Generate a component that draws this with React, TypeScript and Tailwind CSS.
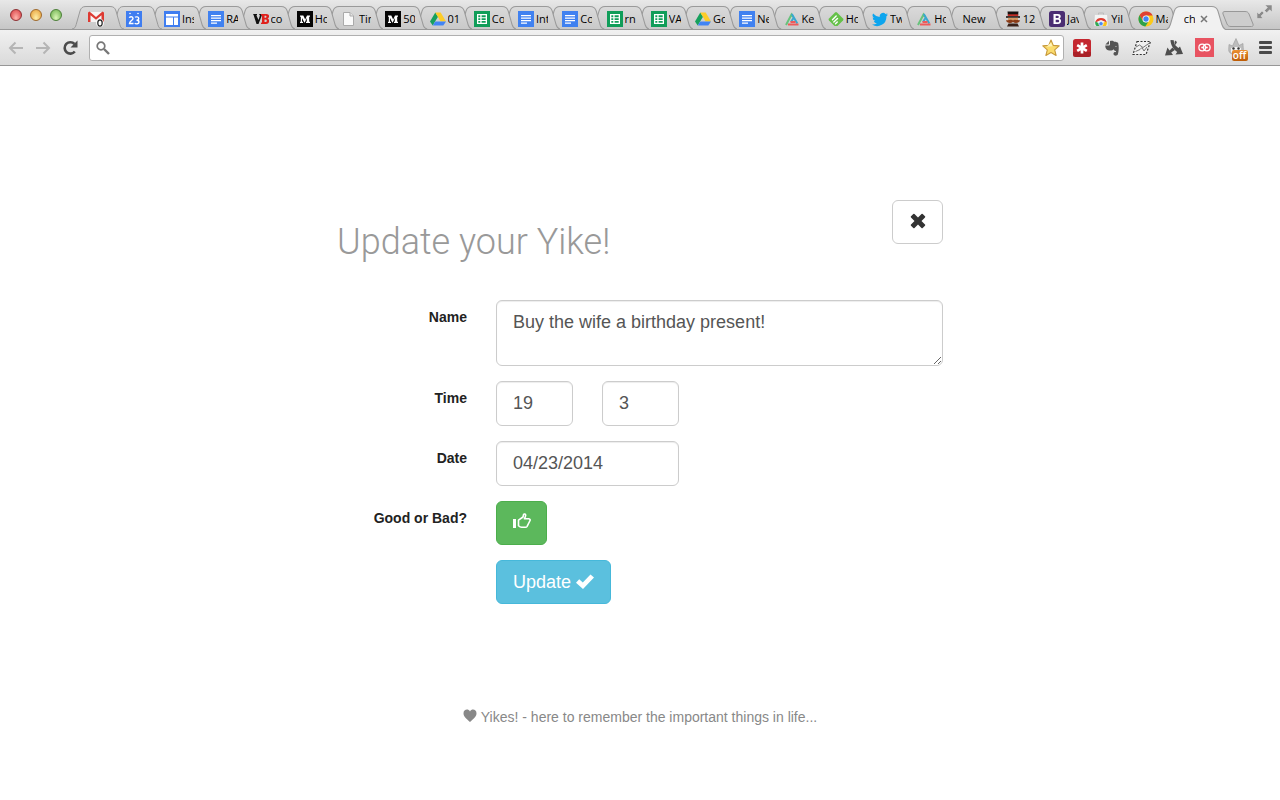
import React from "react";

type IconName =
  | "gmail"
  | "calendar"
  | "sites"
  | "docs"
  | "venture"
  | "medium"
  | "file"
  | "drive"
  | "sheets"
  | "prism"
  | "feedly"
  | "twitter"
  | "hat"
  | "bootstrap"
  | "store"
  | "chrome";

type Tab = { id: number; icon?: IconName; title: string };

const pinned: Tab[] = [
  { id: 1, icon: "gmail", title: "" },
  { id: 2, icon: "calendar", title: "" },
];

const tabs: Tab[] = [
  { id: 3, icon: "sites", title: "Ins" },
  { id: 4, icon: "docs", title: "RA" },
  { id: 5, icon: "venture", title: "co" },
  { id: 6, icon: "medium", title: "Ho" },
  { id: 7, icon: "file", title: "Tin" },
  { id: 8, icon: "medium", title: "50" },
  { id: 9, icon: "drive", title: "01" },
  { id: 10, icon: "sheets", title: "Co" },
  { id: 11, icon: "docs", title: "Int" },
  { id: 12, icon: "docs", title: "Co" },
  { id: 13, icon: "sheets", title: "rn" },
  { id: 14, icon: "sheets", title: "VA" },
  { id: 15, icon: "drive", title: "Go" },
  { id: 16, icon: "docs", title: "Ne" },
  { id: 17, icon: "prism", title: "Ke" },
  { id: 18, icon: "feedly", title: "Ho" },
  { id: 19, icon: "twitter", title: "Tw" },
  { id: 20, icon: "prism", title: "Ho" },
  { id: 21, title: "New" },
  { id: 22, icon: "hat", title: "12" },
  { id: 23, icon: "bootstrap", title: "Jav" },
  { id: 24, icon: "store", title: "Yil" },
  { id: 25, icon: "chrome", title: "Ma" },
];

function Favicon({ name }: { name: IconName }) {
  const art: Record<IconName, React.ReactNode> = {
    gmail: (
      <>
        <path d="M0 1h16v10H0z" fill="#f6f3f3" />
        <path d="M0 11V1.500L1.500.5 8 6l6.500-5.500L16 1.500V11h-2.500V4.200L8 8.800 2.500 4.200V11z" fill="#dd3a32" />
        <circle cx="12" cy="12" r="3.900" fill="#fff" opacity=".9" />
        <ellipse cx="12" cy="12" rx="2.200" ry="3.100" fill="#fff" stroke="#222" strokeWidth="1.200" />
      </>
    ),
    calendar: (
      <>
        <path d="M0 0h16v16H0z" fill="#3f7df0" />
        <circle cx="4" cy="2.500" r=".8" fill="#fff" />
        <circle cx="12" cy="2.500" r=".8" fill="#fff" />
        <path d="M3.300 6.800c.5-1.500 3.700-1.500 3.700.6 0 1.700-3.300 2.800-3.500 5.100h4M9 6.300c1-.8 3.700-.6 3.700 1.200s-1.400 1.700-2.200 1.700c1.200 0 2.500.2 2.500 1.700 0 2.200-3.100 2.300-4.300 1.300" fill="none" stroke="#fff" strokeWidth="1.400" />
      </>
    ),
    sites: (
      <>
        <path d="M0 0h16v16H0z" fill="#3f7df0" />
        <path d="M2 3h12v2.500H2zM2 6.500h7V14H2zM10 6.500h4V14h-4z" fill="#fff" />
      </>
    ),
    docs: (
      <>
        <path d="M0 0h16v16H0z" fill="#4081f0" />
        <path d="M3 4h10v1.300H3zM3 6.500h10v1.300H3zM3 9h10v1.300H3zM3 11.500h6v1.300H3z" fill="#fff" />
      </>
    ),
    venture: (
      <>
        <path d="M0 3h4v1l-.6.2L5.500 9 7 4.200 6.300 4V3H9v1L5.500 13h-2L.6 4z" fill="#111" />
        <path d="M8 3h5.300C17 3 16.500 7 14.500 7.600 17.200 8.500 16.600 13 13 13H8v-1.300l1-.3V4.600L8 4.300zm3.500 1.800v2h1c1.300 0 1.300-2 0-2zm0 3.800v2.500h1.200c1.500 0 1.500-2.500 0-2.500z" fill="#e0201b" />
      </>
    ),
    medium: (
      <>
        <path d="M0 0h16v16H0z" fill="#050505" />
        <path d="M3 4.500h3.300L8.200 8.500 10 4.500h3v1l-.8.4v4.700l.8.4v1H9v-1l.8-.4V7L7.800 11.500h-.5L5 7v3.600l1 .4v1H3v-1l.8-.4V5.900L3 5.500z" fill="#fff" />
      </>
    ),
    file: (
      <>
        <path d="M2.500 1.500H9L12.500 5v9.500h-10z" fill="#fafafa" stroke="#aaa" />
        <path d="M9 1.500V5h3.500" fill="#e6e6e6" stroke="#aaa" />
      </>
    ),
    drive: (
      <>
        <path d="M5.300 1.500 0 10.500l2.700 4L8 5.800z" fill="#16a05d" />
        <path d="M5.300 1.500h5.400l5.300 9h-5.400z" fill="#fdcc28" />
        <path d="M5.300 10.500H16l-2.700 4H2.700z" fill="#4285f4" />
      </>
    ),
    sheets: (
      <>
        <path d="M0 0h16v16H0z" fill="#109d59" />
        <path d="M3 3h10v10H3zm1.300 1.300v1.900h2v-1.900zm3.300 0v1.900h4.100v-1.900zM4.300 7.200v1.700h2V7.200zm3.300 0v1.700h4.100V7.200zM4.300 9.900v1.800h2V9.900zm3.300 0v1.800h4.100V9.900z" fill="#fff" fillRule="evenodd" />
      </>
    ),
    prism: (
      <g fill="none" strokeWidth="2">
        <path d="M2 14 7.500 3.500 9 6" stroke="#67c27b" />
        <path d="m7.800 3 5.500 9.500M9.500 7 7 11" stroke="#38a8d0" />
        <path d="M4 13.500h10.500M6.500 11h5" stroke="#ef5a5a" />
      </g>
    ),
    feedly: (
      <>
        <path d="M7 1.500q1-1 2 0l6 6q1 1 0 2l-5 5q-.500.500-1.200.500H7.200q-.7 0-1.200-.5l-5-5q-1-1 0-2z" fill="#65c149" />
        <path d="m4.500 8.700 3.700-3.700M5.800 11l3.700-3.600M7.500 12.800l1.800-1.800" stroke="#fff" strokeWidth="1.400" strokeLinecap="round" />
      </>
    ),
    twitter: (
      <path d="M16 3.500a6.600 6.600 0 0 1-1.900.5 3.300 3.300 0 0 0 1.400-1.800 6.600 6.600 0 0 1-2 .8 3.300 3.300 0 0 0-5.700 3A9.300 9.300 0 0 1 1.100 2.600a3.300 3.300 0 0 0 1 4.400 3.300 3.300 0 0 1-1.500-.4 3.300 3.300 0 0 0 2.700 3.200 3.300 3.300 0 0 1-1.500.1 3.300 3.300 0 0 0 3.100 2.300A6.600 6.600 0 0 1 0 13.500a9.300 9.300 0 0 0 14.400-8.300A6.700 6.700 0 0 0 16 3.500z" fill="#0da5ee" />
    ),
    hat: (
      <>
        <path d="M2.500.5h11L13 5H3z" fill="#171210" />
        <path d="M2.800 3.300h10.400v1.900H2.800z" fill="#c32c24" />
        <path d="M1 5.200h14v1.600H1z" fill="#171210" />
        <path d="M3 6.800h10v3.500H3z" fill="#d59a66" />
        <path d="M1 9.200c3 .5 5-1.500 7 .2 2-1.700 4 .3 7-.2-.5 3-5 3.500-7 1.700-2 1.800-6.500 1.300-7-1.700z" fill="#8a3b17" />
        <path d="M3.500 12.500h9l1.500 3H2z" fill="#3a2018" />
      </>
    ),
    bootstrap: (
      <>
        <rect width="16" height="16" rx="2.500" fill="#4a2d72" />
        <path d="M4.500 3h4.400c3.600 0 3.400 3.800 1.500 4.600 2.500.7 2.300 5.400-1.400 5.400H4.500zm2.200 1.700V7h1.800c1.800 0 1.800-2.300 0-2.300zm0 4v2.600h2c2 0 2-2.600 0-2.600z" fill="#fff" fillRule="evenodd" />
      </>
    ),
    store: (
      <>
        <path d="M1.500 3.500h13L15 15H1z" fill="#f4f4f4" stroke="#ccc" strokeWidth=".6" />
        <path d="M5.500 3.500V2h5v1.500" fill="none" stroke="#bbb" />
        <path d="M2.200 11.500a6 6 0 0 1 11.600 0L8 9z" fill="#df3b30" />
        <path d="M2.300 10.500c-.4 2 .1 3.500 1.200 4.500H8l-2.500-3z" fill="#30a852" />
        <path d="M13.700 10.500c.5 2 0 3.500-1 4.500H8l2.500-3.500z" fill="#fbc116" />
        <circle cx="8" cy="12.700" r="2.200" fill="#4a8af4" stroke="#fff" strokeWidth=".7" />
      </>
    ),
    chrome: (
      <>
        <circle cx="8" cy="8" r="7.500" fill="#fbc91b" />
        <path d="M1.500 4.200a7.500 7.500 0 0 1 13.200.3H8L4.900 9.800z" fill="#df3f33" />
        <path d="M1.500 4.200a7.500 7.500 0 0 0 5.800 11.300L11 9.800 8 11.500 4.900 9.800z" fill="#2ca14b" />
        <circle cx="8" cy="8" r="3.500" fill="#fff" />
        <circle cx="8" cy="8" r="2.700" fill="#4284f3" />
      </>
    ),
  };
  return (
    <svg viewBox="0 0 16 16" className="size-4 shrink-0" aria-hidden="true">
      {art[name]}
    </svg>
  );
}

function TabShape({ active = false, wide = true }: { active?: boolean; wide?: boolean }) {
  const w = wide ? 58 : 52;
  return (
    <svg
      viewBox={`0 0 ${w} 24`}
      preserveAspectRatio="none"
      className={
        wide
          ? "absolute top-0 left-0 h-6 w-[calc(100%+14px)]"
          : "absolute top-0 left-0 h-6 w-[52px]"
      }
      aria-hidden="true"
    >
      <defs>
        <linearGradient id="tab-idle" x1="0" y1="0" x2="0" y2="1">
          <stop offset="0" stopColor="#dadada" />
          <stop offset="1" stopColor="#c9c9c9" />
        </linearGradient>
      </defs>
      <path
        d={`M0 ${active ? 24 : 23} C3 22.500 3.500 21 4.200 18.500 L8 5 C9 1.800 10.500 .5 14 .5 H${w - 14} C${w - 10.5} .5 ${w - 9} 1.800 ${w - 8} 5 L${w - 4.2} 18.500 C${w - 3.5} 21 ${w - 3} 22.500 ${w} ${active ? 24 : 23}`}
        fill={active ? "#f1f1f1" : "url(#tab-idle)"}
        stroke="#9a9a9a"
      />
    </svg>
  );
}

const tabText = "font-['Open_Sans','Noto_Sans',sans-serif] text-[11px] leading-4 font-medium text-black";

function BrowserTabs() {
  return (
    <div className="flex h-[30px] items-end border-b border-[#999] bg-linear-to-b from-[#e8e8e8] to-[#c6c6c6]">
      <div className="flex w-[72px] shrink-0 items-center gap-2 self-stretch pl-[10px]">
        <button type="button" aria-label="Close" className="size-3 rounded-full border border-[#8f3033] bg-radial-[at_50%_80%] from-[#ffb5ac] to-[#d8383e]" />
        <button type="button" aria-label="Minimize" className="size-3 rounded-full border border-[#a06a2c] bg-radial-[at_50%_80%] from-[#fff0a8] to-[#e59a30]" />
        <button type="button" aria-label="Zoom" className="size-3 rounded-full border border-[#4c8038] bg-radial-[at_50%_80%] from-[#dcf8b8] to-[#66ad48]" />
      </div>
      {pinned.map((tab, i) => (
        <button
          key={tab.id}
          type="button"
          aria-label={tab.icon}
          className="relative flex h-[23px] w-[38px] shrink-0 items-center pt-[2px] pl-4"
          style={{ zIndex: 40 - i }}
        >
          <TabShape wide={false} />
          <span className="relative">{tab.icon && <Favicon name={tab.icon} />}</span>
        </button>
      ))}
      {tabs.map((tab, i) => (
        <button
          key={tab.id}
          type="button"
          className="relative flex h-[23px] min-w-0 flex-1 items-center gap-[2px] pt-[2px] pl-4"
          style={{ zIndex: 30 - i }}
        >
          <TabShape />
          {tab.icon ? (
            <>
              <span className="relative shrink-0"><Favicon name={tab.icon} /></span>
              <span className={`relative w-3 shrink-0 overflow-hidden text-left ${tabText}`}>
                {tab.title}
              </span>
            </>
          ) : (
            <span className={`relative shrink-0 pl-[2px] ${tabText}`}>{tab.title}</span>
          )}
        </button>
      ))}
      <div className="relative z-50 flex h-[23px] min-w-0 flex-1 items-center gap-1 pt-[2px] pl-[18px]">
        <TabShape active />
        <span className={`relative w-[11px] shrink-0 overflow-hidden ${tabText}`}>ch</span>
        <button type="button" aria-label="Close tab" className="relative shrink-0">
          <svg viewBox="0 0 10 10" className="size-[10px]" aria-hidden="true">
            <path d="m2 2 6 6M8 2 2 8" stroke="#777" strokeWidth="1.500" />
          </svg>
        </button>
      </div>
      <div className="flex w-[68px] shrink-0 justify-between self-stretch pr-2 pl-[10px]">
        <button type="button" aria-label="New tab" className="self-end pb-[2px]">
          <svg viewBox="0 0 32 16" className="h-4 w-8" aria-hidden="true">
            <path d="M3 .5h20c2 0 3 .5 4 2.500l4 10c.5 1.500 0 2.500-1.500 2.500H9c-2 0-3-.5-4-2.500L1 3C.5 1.500 1 .5 3 .5z" fill="#cdcdcd" stroke="#989898" />
          </svg>
        </button>
        <button type="button" aria-label="Full screen" className="self-start pt-[5px]">
          <svg viewBox="0 0 15 15" className="size-[15px]" aria-hidden="true">
            <path d="M8 0h7v7l-2.300-2.300L9.700 7.700 7.500 5.500l3-3zM0 7l2 2 3-3 2 2-3 3 2 2.500H0z" fill="#8a8a8a" stroke="#e4e4e4" strokeWidth=".5" />
          </svg>
        </button>
      </div>
    </div>
  );
}

function Toolbar() {
  return (
    <div className="flex h-9 items-center border-b border-[#979797] bg-linear-to-b from-[#f1f1f1] to-[#dadada] px-2">
      <div className="flex w-[81px] shrink-0 items-center gap-[11px]">
        <button type="button" aria-label="Back">
          <svg viewBox="0 0 16 14" className="h-[14px] w-4" aria-hidden="true">
            <path d="M15 7H2M7.500 1.500 2 7l5.500 5.500" fill="none" stroke="#b5b5b5" strokeWidth="2" />
          </svg>
        </button>
        <button type="button" aria-label="Forward">
          <svg viewBox="0 0 16 14" className="h-[14px] w-4" aria-hidden="true">
            <path d="M1 7h13M8.500 1.500 14 7l-5.500 5.500" fill="none" stroke="#b5b5b5" strokeWidth="2" />
          </svg>
        </button>
        <button type="button" aria-label="Reload">
          <svg viewBox="0 0 16 16" className="size-4" aria-hidden="true">
            <path d="M12.800 11.500A5.700 5.700 0 1 1 12.500 4" fill="none" stroke="#4b4b4b" strokeWidth="2.600" />
            <path d="M15.500.5V7.500H8.500z" fill="#4b4b4b" />
          </svg>
        </button>
      </div>
      <div className="flex h-[26px] min-w-0 flex-1 items-center rounded-[3px] border border-[#b0b0b0] bg-white pr-[3px] pl-[6px]">
        <svg viewBox="0 0 14 14" className="size-[14px] shrink-0" aria-hidden="true">
          <circle cx="5" cy="5" r="3.800" fill="none" stroke="#777" strokeWidth="1.700" />
          <path d="m8 8 5 5" stroke="#777" strokeWidth="2.400" />
        </svg>
        <input type="text" aria-label="Address" className="h-full min-w-0 flex-1 px-2 text-sm outline-none" />
        <button type="button" aria-label="Bookmark">
          <svg viewBox="0 0 18 18" className="size-[18px]" aria-hidden="true">
            <path d="m9 1 2.300 5.400 5.900.5-4.500 3.900 1.400 5.700L9 13.500l-5.100 3 1.400-5.700L.8 6.900l5.900-.5z" fill="#fbdc6d" stroke="#c89a3c" strokeWidth="1.100" strokeLinejoin="round" />
            <path d="m9 3.500 1.500 3.800-6 .5z" fill="#fff3b8" />
          </svg>
        </button>
      </div>
      <div className="flex w-[208px] shrink-0 items-center justify-between pl-[9px]">
        <button type="button" aria-label="Passwords">
          <svg viewBox="0 0 18 18" className="size-[18px]" aria-hidden="true">
            <rect width="18" height="18" rx="2.500" fill="#c4272f" />
            <path d="M0 13h18v2.500a2.500 2.500 0 0 1-2.500 2.500h-13A2.500 2.500 0 0 1 0 15.500z" fill="#8f1a20" opacity=".5" />
            <path d="M9 3.500v11M4.200 6.200l9.600 5.600M13.800 6.200l-9.600 5.600" stroke="#fff" strokeWidth="2.700" />
          </svg>
        </button>
        <button type="button" aria-label="Clip page">
          <svg viewBox="0 0 16 16" className="size-4" aria-hidden="true">
            <path d="M5 .7 1.400 4.500H4c.8 0 1-.3 1-1zM6 1c2-.7 3.500-.3 4.200.8 2 .1 3.600.4 4 1.500.9 3.500.6 8-.4 11.200-.7 1.700-4.200 1.500-4.300-.5-.1-1.700 1.400-2.400 2.500-1.800v-1c-1.600-.3-2-1-2.200-1.900-1 1-2 1.400-3.800 1.300C3.500 10.500 1.200 9 1.300 5.500h3C5.500 5.500 6 5 6 4z" fill="#555" />
            <path d="M11 6.700c.7-.6 1.500-.5 2 .2z" fill="#ddd" />
          </svg>
        </button>
        <button type="button" aria-label="Sketch">
          <svg viewBox="0 0 20 16" className="h-4 w-5" aria-hidden="true">
            <path d="M5 1.500h13.500L14 14.500H1z" fill="#f0f0f0" stroke="#333" strokeWidth="1.200" strokeDasharray="2 1.500" />
            <path d="m4 7 3.500-2L11 7.500 17.500 3M3.500 11.500 8 9.500l2-2 2 3.500 3-4" fill="none" stroke="#666" strokeWidth=".9" />
          </svg>
        </button>
        <button type="button" aria-label="Branches">
          <svg viewBox="0 0 18 17" className="h-[17px] w-[18px]" aria-hidden="true">
            <path d="m5.500 1 3.300.2c0 3 1 5 4.700 7.800l1.500-1.500 3 7.500-7.500.5 1.700-2.500C8 10 5.500 5.500 5.500 1z" fill="#4e4e4e" />
            <path d="M7.500 8.500 9.800 11 6.200 13.500 8 16l-8 .5L2.500 8.500 4.500 11.500z" fill="#4e4e4e" />
            <path d="M10 1.500 12 3l-1.500 3-1-2z" fill="#4e4e4e" />
          </svg>
        </button>
        <button type="button" aria-label="Links">
          <svg viewBox="0 0 19 19" className="size-[19px]" aria-hidden="true">
            <path d="M0 0h19v19H0z" fill="#e85361" />
            <g fill="none" stroke="#fff" strokeWidth="1.300">
              <circle cx="7.200" cy="9.500" r="3.300" />
              <circle cx="11.800" cy="9.500" r="3.300" />
            </g>
            <circle cx="7.200" cy="9.500" r="1" fill="#fff" />
            <circle cx="11.800" cy="9.500" r="1" fill="#fff" />
          </svg>
        </button>
        <button type="button" aria-label="Blocker" className="relative mr-[2px]">
          <svg viewBox="0 0 18 20" className="h-5 w-[18px]" aria-hidden="true">
            <path d="M2 6.500 5.500 8 9 .5 12 7.500 16 5.500c0 3 .5 5 .3 7.500-1 5-13 5-14.500 0C1.500 11 2 9 2 6.500z" fill="#bdbdbd" stroke="#999" strokeWidth=".6" />
            <path d="M4 10c2-1.500 8-1.500 10 0v4c-2 3-8 3-10 0z" fill="#f3f3f3" />
            <circle cx="6.500" cy="10.500" r="1.200" fill="#333" />
            <circle cx="11.500" cy="10.500" r="1.200" fill="#333" />
          </svg>
          <span className="absolute top-3 left-[5px] flex h-[11px] w-4 items-center justify-center rounded-[2px] bg-linear-to-b from-[#ec9030] to-[#bd5c05] font-['Open_Sans',sans-serif] text-[10px] leading-[11px] font-semibold text-white">
            off
          </span>
        </button>
        <button type="button" aria-label="Menu">
          <svg viewBox="0 0 13 13" className="size-[13px]" aria-hidden="true">
            <rect width="13" height="3" rx="1" fill="#4a4a4a" />
            <rect y="5" width="13" height="3" rx="1" fill="#4a4a4a" />
            <rect y="10" width="13" height="3" rx="1" fill="#4a4a4a" />
          </svg>
        </button>
      </div>
    </div>
  );
}

const field =
  "rounded-md border border-[#ccc] bg-white text-lg text-[#555] shadow-[inset_0_1px_1px_rgba(0,0,0,0.075)]";
const label = "pt-2 text-right text-sm leading-[18px] font-bold text-[#222]";

export default function App() {
  return (
    <div className="min-h-screen bg-white font-['Liberation_Sans',Arial,sans-serif]">
      <header className="overflow-hidden">
        <BrowserTabs />
        <Toolbar />
      </header>
      <main className="mx-auto max-w-[606px] pt-[134px]">
        <div className="flex items-start justify-between">
          <h1 className="pt-5 font-['Roboto',sans-serif] text-[36px] leading-[44px] font-light text-[#999]">
            Update your Yike!
          </h1>
          <button type="button" aria-label="Cancel" className="flex h-11 w-[51px] justify-center rounded-md border border-[#ccc] bg-white pt-3">
            <svg viewBox="0 0 16 16" className="size-4" aria-hidden="true">
              <path d="M4.500 1 8 4.500 11.500 1q.6-.6 1.200 0l2.300 2.300q.6.6 0 1.200L11.500 8l3.500 3.500q.6.6 0 1.200L12.700 15q-.6.6-1.200 0L8 11.500 4.500 15q-.6.6-1.200 0L1 12.700q-.6-.6 0-1.200L4.500 8 1 4.500q-.6-.6 0-1.200L3.300 1q.6-.6 1.200 0z" fill="#333" />
            </svg>
          </button>
        </div>
        <form
          className="grid grid-cols-[130px_1fr] gap-x-[29px] gap-y-[15px] pt-9"
          onSubmit={(e) => e.preventDefault()}
        >
          <label htmlFor="name" className={label}>Name</label>
          <textarea
            id="name"
            defaultValue="Buy the wife a birthday present!"
            className={`${field} block h-[66px] w-full px-4 py-[9px] leading-6`}
          />

          <label htmlFor="hour" className={label}>Time</label>
          <div className="flex gap-[29px]">
            <input id="hour" type="text" defaultValue="19" className={`${field} h-[45px] w-[77px] px-4`} />
            <input type="text" aria-label="Minute" defaultValue="3" className={`${field} h-[45px] w-[77px] px-4`} />
          </div>

          <label htmlFor="date" className={label}>Date</label>
          <input id="date" type="text" defaultValue="04/23/2014" className={`${field} h-[45px] w-[183px] px-4`} />

          <label htmlFor="mood" className={label}>Good or Bad?</label>
          <button id="mood" type="button" className="flex h-11 w-[51px] justify-center rounded-md border border-[#4cae4c] bg-[#5cb85c] pt-[11px]">
            <svg viewBox="0 0 18 16" className="h-4 w-[18px]" aria-hidden="true">
              <path d="M0 6h3v9H0z" fill="#fff" />
              <path d="M5.500 7.200 10 4l.6-2.600c.5-.8 2.200-.4 2.100.9-.1 1.300-.8 2.400-1.300 3.500h4.400c1.400.1 1.700 1.400 1 2.200l-2.700 5.300c-.4.700-.9 1-1.700 1H8.600c-1.200 0-2-.4-3.100-1.500z" fill="none" stroke="#fff" strokeWidth="1.600" strokeLinejoin="round" />
            </svg>
          </button>

          <button
            type="submit"
            className="col-start-2 flex h-11 w-[115px] items-center justify-center gap-[5px] rounded-md border border-[#46b8da] bg-[#5bc0de] text-lg leading-6 text-white"
          >
            Update
            <svg viewBox="0 0 18 16" className="h-4 w-[18px]" aria-hidden="true">
              <path d="M14.500.5 18 3.500 7 15 0 8.700 3.200 5.300 6.800 8.500z" fill="#fff" />
            </svg>
          </button>
        </form>
      </main>
      <footer className="flex items-center justify-center gap-1 pt-[104px] text-sm leading-[18px] text-[#888]">
        <svg viewBox="0 0 14 13" className="mb-1 h-[13px] w-[14px]" aria-hidden="true">
          <path d="M7 13C3 9.500 0.500 7.500 0.500 4.300 0.500.3 5.300-.7 7 2.500 8.700-.7 13.500.3 13.500 4.300 13.500 7.500 11 9.500 7 13z" fill="#888" />
        </svg>
        <p>Yikes! - here to remember the important things in life...</p>
      </footer>
    </div>
  );
}
